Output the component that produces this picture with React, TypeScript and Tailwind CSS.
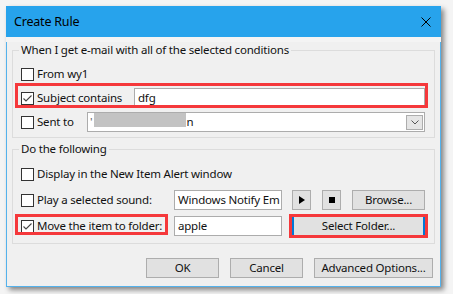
import type { ReactNode } from "react";

function Check({ checked = false }: { checked?: boolean }) {
  return (
    <span className="flex h-[13px] w-[13px] shrink-0 items-center justify-center border border-[#333333] bg-white">
      {checked && (
        <svg width="11" height="11" viewBox="0 0 11 11">
          <polyline
            points="1.5,5.5 4,8 9.5,2.5"
            fill="none"
            stroke="#444444"
            strokeWidth="1.1"
          />
        </svg>
      )}
    </span>
  );
}

function Btn({
  children,
  className = "",
}: {
  children: ReactNode;
  className?: string;
}) {
  return (
    <div
      className={`flex h-[20px] items-center justify-center border border-[#adadad] bg-[#e1e1e1] ${className}`}
    >
      {children}
    </div>
  );
}

function Field({
  children,
  className = "",
}: {
  children?: ReactNode;
  className?: string;
}) {
  return (
    <div
      className={`flex h-[20px] items-center overflow-hidden whitespace-nowrap border border-[#acacac] bg-white px-[3px] ${className}`}
    >
      {children}
    </div>
  );
}

export default function App() {
  return (
    <div className="h-[294px] w-[453px] bg-[#f4f4f4] pl-[6px] pt-[6px] font-['Noto_Sans',sans-serif] text-[11.5px] leading-[16px] tracking-[-0.2px] text-[#111111]">
      <div className="w-[435px] shadow-[3px_3px_5px_rgba(0,0,0,0.45)]">
        {/* title bar */}
        <div className="flex h-[31px] items-center justify-between bg-[#27a3ec] pl-[8px] pr-[10px]">
          <span className="text-[12.5px] text-black">Create Rule</span>
          <svg width="10" height="10" viewBox="0 0 10 10">
            <path d="M0.5 0.5 L9.5 9.5 M9.5 0.5 L0.5 9.5" stroke="#000" strokeWidth="1" />
          </svg>
        </div>

        <div className="border-x border-b border-[#54b2ec] bg-[#f0f0f0] px-[5px] pb-[8px]">
          {/* conditions */}
          <fieldset className="mt-[5px] border border-[#dcdcdc] pb-[5px] pl-[8px] pr-[9px]">
            <legend className="-ml-[2px] px-[2px]">
              When I get e-mail with all of the selected conditions
            </legend>

            <div className="mt-[6px] flex h-[20px] items-center">
              <Check />
              <span className="ml-[3px] whitespace-nowrap">From wy1</span>
            </div>

            <div className="relative mt-[4px] flex h-[20px] items-center">
              <Check checked />
              <span className="ml-[3px] w-[97px] shrink-0 whitespace-nowrap">
                Subject contains
              </span>
              <Field className="flex-1">dfg</Field>
              <div className="absolute -left-[6px] -right-[3px] -top-[5px] bottom-0 border-[3px] border-[#f5383b]" />
            </div>

            <div className="mt-[4px] flex h-[20px] items-center">
              <Check />
              <span className="ml-[3px] w-[50px] shrink-0 whitespace-nowrap">Sent to</span>
              <div className="flex h-[20px] flex-1 border border-[#acacac] bg-white pl-[2px] pr-[1px]">
                <span className="self-center text-[#666666]">'</span>
                <span className="ml-[2px] h-[14px] w-[92px] bg-[#c3c3c3]" />
                <span className="self-center">n</span>
                <div className="ml-auto mt-[2px] flex h-[15px] w-[17px] items-center justify-center border border-[#adadad] bg-[#e5e5e5]">
                  <svg width="8" height="5" viewBox="0 0 8 5">
                    <polyline points="0.5,0.5 4,4 7.5,0.5" fill="none" stroke="#555555" strokeWidth="1" />
                  </svg>
                </div>
              </div>
            </div>
          </fieldset>

          {/* actions */}
          <fieldset className="mt-[3px] border border-[#dcdcdc] pb-[7px] pl-[8px] pr-[9px]">
            <legend className="-ml-[2px] px-[2px]">Do the following</legend>

            <div className="mt-[7px] flex h-[20px] items-center">
              <Check />
              <span className="ml-[3px] whitespace-nowrap">
                Display in the New Item Alert window
              </span>
            </div>

            <div className="mt-[6px] flex h-[20px] items-center">
              <Check />
              <span className="ml-[3px] w-[137px] shrink-0 whitespace-nowrap">
                Play a selected sound:
              </span>
              <Field className="w-[108px]">Windows Notify Em</Field>
              <Btn className="ml-[10px] w-[19px]">
                <svg width="6" height="8" viewBox="0 0 6 8">
                  <polygon points="0,0 6,4 0,8" fill="#000" />
                </svg>
              </Btn>
              <Btn className="ml-[11px] w-[19px]">
                <span className="h-[6px] w-[6px] bg-black" />
              </Btn>
              <Btn className="ml-[11px] flex-1">Browse...</Btn>
            </div>

            <div className="relative mt-[6px] flex h-[20px] items-center">
              <Check checked />
              <span className="ml-[3px] w-[137px] shrink-0 whitespace-nowrap">
                Move the item to folder:
              </span>
              <Field className="w-[108px]">apple</Field>
              <div className="-my-[2px] -mr-[3px] ml-[7px] flex h-[24px] flex-1 border-[3px] border-[#f5383b]">
                <div className="flex flex-1 items-center justify-center border-x-2 border-[#0078d7] bg-[#e1e1e1]">
                  Select Folder...
                </div>
              </div>
              <div className="absolute -left-[6px] -top-[2px] h-[21px] w-[153px] border-[3px] border-[#f5383b]" />
            </div>
          </fieldset>

          {/* dialog buttons */}
          <div className="mt-[14px] flex justify-end gap-[11px] pr-[2px]">
            <Btn className="w-[73px]">OK</Btn>
            <Btn className="w-[73px]">Cancel</Btn>
            <Btn className="w-[119px]">Advanced Options...</Btn>
          </div>
        </div>
      </div>
    </div>
  );
}
